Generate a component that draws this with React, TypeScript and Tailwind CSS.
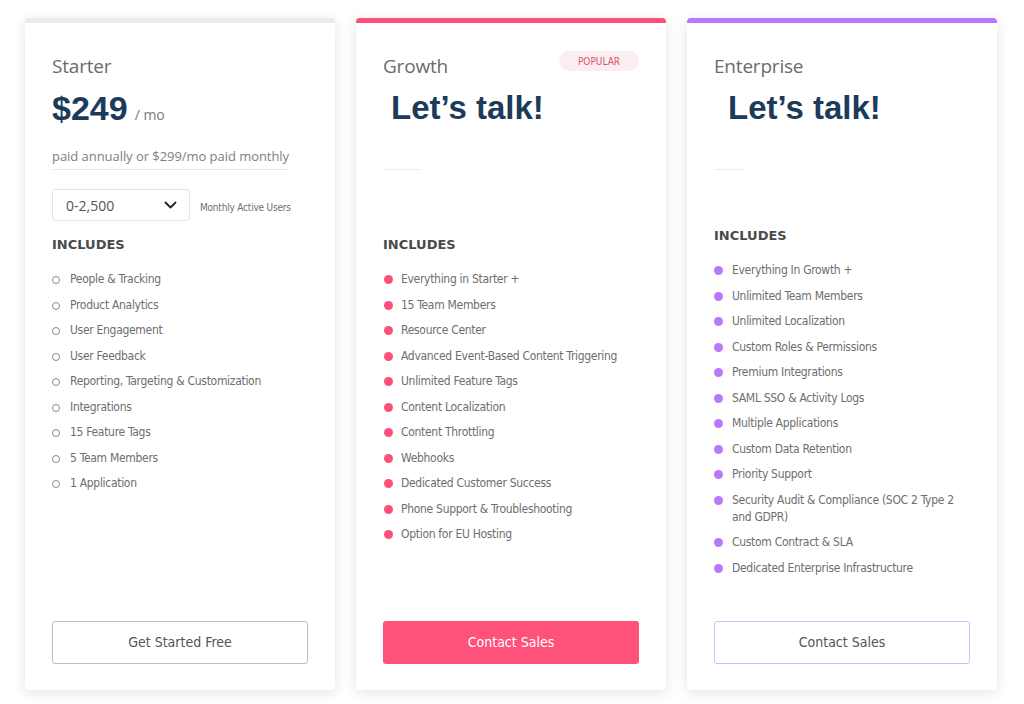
import React from "react";

const starter = [
  "People & Tracking",
  "Product Analytics",
  "User Engagement",
  "User Feedback",
  "Reporting, Targeting & Customization",
  "Integrations",
  "15 Feature Tags",
  "5 Team Members",
  "1 Application",
];
const growth = [
  "Everything in Starter +",
  "15 Team Members",
  "Resource Center",
  "Advanced Event-Based Content Triggering",
  "Unlimited Feature Tags",
  "Content Localization",
  "Content Throttling",
  "Webhooks",
  "Dedicated Customer Success",
  "Phone Support & Troubleshooting",
  "Option for EU Hosting",
];
const enterprise = [
  "Everything In Growth +",
  "Unlimited Team Members",
  "Unlimited Localization",
  "Custom Roles & Permissions",
  "Premium Integrations",
  "SAML SSO & Activity Logs",
  "Multiple Applications",
  "Custom Data Retention",
  "Priority Support",
  "Security Audit & Compliance (SOC 2 Type 2 and GDPR)",
  "Custom Contract & SLA",
  "Dedicated Enterprise Infrastructure",
];

const condFont = "font-['DejaVu_Sans_Condensed','DejaVu_Sans',sans-serif] [font-stretch:condensed]";

function Includes({ className = "" }: { className?: string }) {
  return (
    <div
      className={`text-[13px] leading-[18px] font-bold text-[#4a4a4a] font-['DejaVu_Sans',sans-serif] ${className}`}
    >
      INCLUDES
    </div>
  );
}

function List({ items, kind }: { items: string[]; kind: "hollow" | "pink" | "purple" }) {
  return (
    <ul className="flex flex-col gap-[8.5px] mt-[17px]">
      {items.map((t) => (
        <li key={t} className="flex items-start">
          <span className="w-[18px] shrink-0 flex pt-[4px]">
            {kind === "hollow" ? (
              <span className="w-[8px] h-[8px] mt-[1px] rounded-full border border-[#8a8a8a]" />
            ) : kind === "pink" ? (
              <span className="w-[9px] h-[9px] rounded-full bg-[#fd4f79] ml-[1px]" />
            ) : (
              <span className="w-[9px] h-[9px] rounded-full bg-[#b679fb]" />
            )}
          </span>
          <span className={`text-[12px] leading-[17px] text-[#6e6e6e] ${condFont} tracking-[-0.3px] pr-[14px]`}>{t}</span>
        </li>
      ))}
    </ul>
  );
}

function Card({ top, children }: { top: string; children: React.ReactNode }) {
  return (
    <div
      className={`w-[310px] h-[672px] bg-white rounded-[4px] border-t-[5px] ${top} shadow-[0_3px_14px_rgba(0,0,0,0.11)] flex flex-col px-[27px] pt-[31px] pb-[26px]`}
    >
      {children}
    </div>
  );
}

const titleCls =
  "text-[19px] leading-[24px] text-[#6b6b6b] font-['Open_Sans',sans-serif] tracking-[-0.2px]";
const talkCls =
  "text-[33px] leading-[40px] font-bold text-[#1c3b5a] font-['Liberation_Sans',Arial,sans-serif] mt-[10px]";

export default function App() {
  return (
    <div className="w-[1024px] h-[704px] bg-white flex gap-[21px] pl-[25px] pt-[18px]">
      <Card top="border-[#ececec]">
        <div className={titleCls}>Starter</div>
        <div className="flex items-baseline mt-[10px] h-[40px]">
          <span className="text-[34px] leading-[40px] font-bold text-[#1c3b5a] font-['Liberation_Sans',Arial,sans-serif]">
            $249
          </span>
          <span className="ml-[7px] text-[14px] text-[#7a7a7a] font-['Open_Sans',sans-serif]">/ mo</span>
        </div>
        <div className="mt-[18px] self-start border-b border-[#e6e6e6] pb-[3px] text-[13px] leading-[20px] text-[#808080] font-['Open_Sans',sans-serif] tracking-[-0.05px]">
          paid annually or $299/mo paid monthly
        </div>
        <div className="mt-[19px] flex items-center">
          <div className="w-[138px] h-[32px] border border-[#e4e4e4] rounded-[3px] flex items-center justify-between pl-[13px] pr-[12px]">
            <span className="text-[14px] text-[#555] font-['Open_Sans',sans-serif]">0-2,500</span>
            <svg width="13" height="8" viewBox="0 0 13 8" fill="none">
              <path d="M1.5 1.5 6.5 6.5 11.5 1.5" stroke="#222" strokeWidth="1.8" strokeLinecap="round" strokeLinejoin="round" />
            </svg>
          </div>
          <span className={`ml-[10px] text-[10px] text-[#6e6e6e] ${condFont} tracking-[-0.2px] mt-[5px]`}>Monthly Active Users</span>
        </div>
        <Includes className="mt-[15px]" />
        <List items={starter} kind="hollow" />
        <button className={`mt-auto h-[43px] w-full border border-[#bdbdbd] rounded-[3px] text-[14px] text-[#555] ${condFont}`}>
          Get Started Free
        </button>
      </Card>

      <Card top="border-[#fd4f79]">
        <div className="flex justify-between items-start">
          <div className={titleCls}>Growth</div>
          <div className={`mt-[-3px] w-[80px] h-[20px] rounded-full bg-[#fbeef1] flex items-center justify-center text-[10px] text-[#d9536f] ${condFont}`}>
            POPULAR
          </div>
        </div>
        <div className={`${talkCls} pl-[8px]`}>Let’s talk!</div>
        <div className="mt-[41px] w-[38px] h-px bg-[#ececec]" />
        <Includes className="mt-[66px]" />
        <List items={growth} kind="pink" />
        <button className={`mt-auto h-[43px] w-full bg-[#fe527b] rounded-[3px] text-[14px] text-white ${condFont}`}>
          Contact Sales
        </button>
      </Card>

      <Card top="border-[#b679fb]">
        <div className={titleCls}>Enterprise</div>
        <div className={`${talkCls} pl-[14px]`}>Let’s talk!</div>
        <div className="mt-[41px] w-[30px] h-px bg-[#ececec]" />
        <Includes className="mt-[57px]" />
        <List items={enterprise} kind="purple" />
        <button className={`mt-auto h-[43px] w-full border border-[#d7b9fb] rounded-[3px] text-[14px] text-[#555] ${condFont}`}>
          Contact Sales
        </button>
      </Card>
    </div>
  );
}
